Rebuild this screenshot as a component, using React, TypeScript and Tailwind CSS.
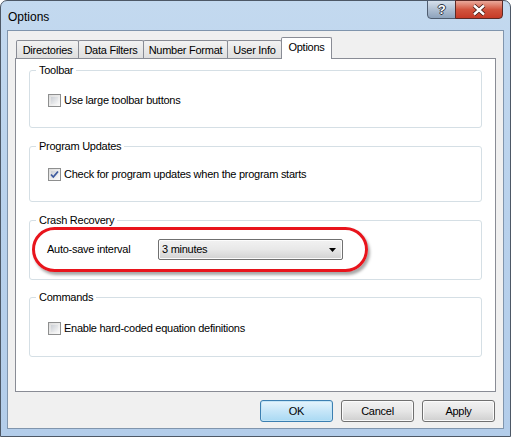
import React from 'react';

const font = { fontFamily: '"Liberation Sans", Arial, sans-serif' };

function CheckBox({ checked }: { checked?: boolean }) {
  return (
    <span className="relative inline-flex w-[13px] h-[13px] border border-[#8e8f8f] bg-gradient-to-br from-[#dcdcdc] to-[#fbfbfb] items-center justify-center shrink-0">
      <span className="absolute inset-[2px] bg-gradient-to-br from-[#cbcfd5] to-[#f6f6f6]" />
      {checked && (
        <svg viewBox="0 0 13 13" className="absolute -left-px -top-px w-[13px] h-[13px]">
          <path d="M3 6.5 L5.3 9 L10 3.5" fill="none" stroke="#3d5a9e" strokeWidth="1.8" />
        </svg>
      )}
    </span>
  );
}

function Group({ title, children, className }: { title: string; children?: React.ReactNode; className?: string }) {
  return (
    <div className={`relative shrink-0 border border-[#d5dfe5] rounded-[3px] ${className ?? ''}`}>
      <span className="absolute -top-[8px] left-[6px] bg-white px-[3px] leading-[14px] text-[11px] text-black">{title}</span>
      {children}
    </div>
  );
}

function Tab({ label, selected, width }: { label: string; selected?: boolean; width: string }) {
  if (selected) {
    return (
      <div className={`relative z-10 -mb-px h-[22px] ${width} border border-b-0 border-[#898c95] bg-white rounded-t-[2px] flex items-center justify-center pb-[2px] text-[11px] self-end`}>
        {label}
      </div>
    );
  }
  return (
    <div className={`h-[18px] ${width} border border-b-0 border-[#898c95] bg-gradient-to-b from-[#f2f2f2] to-[#dfdfdf] rounded-t-[2px] flex items-center justify-center text-[11px] -mr-px self-end pt-[1px]`}>
      {label}
    </div>
  );
}

function Button({ label, primary }: { label: string; primary?: boolean }) {
  return (
    <div
      className={`w-[73px] h-[22px] rounded-[3px] border flex items-center justify-center text-[11px] ${
        primary
          ? 'border-[#3c7fb1] bg-gradient-to-b from-[#e6f4fc] via-[#c6e6f8] to-[#a9d9f3] shadow-[inset_0_0_0_1px_#c4e5f6]'
          : 'border-[#707070] bg-gradient-to-b from-[#f2f2f2] via-[#e6e6e6] to-[#cfcfcf] shadow-[inset_0_0_0_1px_#fbfbfb]'
      }`}
    >
      {label}
    </div>
  );
}

export default function App() {
  return (
    <div style={font} className="w-[511px] h-[437px] overflow-hidden bg-white tracking-[-0.26px]">
      <div className="w-[511px] h-[437px] flex flex-col rounded-t-[7px] border border-[#4d5866] bg-gradient-to-b from-[#c3d9ef] via-[#b8d1ec] to-[#b3cdea] px-[6px] pb-[7px] text-black">
        {/* title bar */}
        <div className="h-[29px] flex items-start justify-between">
          <span className="pt-[7px] pl-[1px] text-[12px] text-black tracking-normal">Options</span>
          <div className="flex mr-[1px] -mt-px">
            <div className="w-[29px] h-[19px] rounded-bl-[4px] border border-[#4f5d70] bg-gradient-to-b from-[#d6e0ec] via-[#afbfd2] to-[#8ea3bc] flex items-center justify-center">
              <span className="text-[13px] font-bold leading-none text-white [text-shadow:1px_0_0_#2a3342,-1px_0_0_#2a3342,0_1px_0_#2a3342,0_-1px_0_#2a3342]">?</span>
            </div>
            <div className="w-[48px] h-[19px] -ml-px rounded-br-[4px] border border-[#5c2a26] bg-gradient-to-b from-[#e9a99b] via-[#d2543e] to-[#c63a27] flex items-center justify-center">
              <svg viewBox="0 0 14 12" className="w-[14px] h-[12px]">
                <path d="M2 1.5 L12 10.5 M12 1.5 L2 10.5" stroke="#3a1510" strokeWidth="4" />
                <path d="M2 1.5 L12 10.5 M12 1.5 L2 10.5" stroke="#fff" strokeWidth="2.4" />
              </svg>
            </div>
          </div>
        </div>

        {/* client area */}
        <div className="flex-1 bg-[#f0f0f0] border border-[#8095ad] flex flex-col pl-[7px] pr-[7px]">
          <div className="flex h-[27px] pl-[1px] items-end">
            <Tab label="Directories" width="w-[63px]" />
            <Tab label="Data Filters" width="w-[66px]" />
            <Tab label="Number Format" width="w-[85px]" />
            <Tab label="User Info" width="w-[55px]" />
            <Tab label="Options" width="w-[51px]" selected />
          </div>
          <div className="h-[334px] bg-white border border-[#898c95] px-[13px] pt-[11px] flex flex-col">
            <Group title="Toolbar" className="h-[58px] flex items-start pl-[18px] pt-[23px]">
              <div className="flex items-center gap-[3px] text-[11px] leading-[13px]">
                <CheckBox />
                <span>Use large toolbar buttons</span>
              </div>
            </Group>
            <Group title="Program Updates" className="mt-[18px] h-[56px] flex items-start pl-[18px] pt-[21px]">
              <div className="flex items-center gap-[3px] text-[11px] leading-[13px]">
                <CheckBox checked />
                <span>Check for program updates when the program starts</span>
              </div>
            </Group>
            <Group title="Crash Recovery" className="mt-[18px] h-[60px] flex items-start pl-[17px] pt-[18px]">
              <div className="flex items-center text-[11px]">
                <span className="w-[111px]">Auto-save interval</span>
                <div className="w-[185px] h-[21px] rounded-[2px] border border-[#707070] bg-gradient-to-b from-[#f2f2f2] via-[#e8e8e8] to-[#d2d2d2] shadow-[inset_0_0_0_1px_#fcfcfc] flex items-center justify-between pl-[3px] pr-[6px]">
                  <span>3 minutes</span>
                  <svg viewBox="0 0 7 4" className="w-[7px] h-[4px]">
                    <path d="M0 0 H7 L3.5 4 Z" fill="#000" />
                  </svg>
                </div>
              </div>
              <div className="absolute left-[2px] top-[6px] w-[336px] h-[45px] rounded-full border-[3px] border-[#e8141c] shadow-[2px_3px_3px_rgba(0,0,0,0.35)] pointer-events-none" />
            </Group>
            <Group title="Commands" className="mt-[17px] h-[60px] flex items-start pl-[18px] pt-[24px]">
              <div className="flex items-center gap-[3px] text-[11px] leading-[13px]">
                <CheckBox />
                <span>Enable hard-coded equation definitions</span>
              </div>
            </Group>
          </div>
          <div className="flex justify-end gap-[8px] pt-[8px] pr-px">
            <Button label="OK" primary />
            <Button label="Cancel" />
            <Button label="Apply" />
          </div>
        </div>
      </div>
    </div>
  );
}
